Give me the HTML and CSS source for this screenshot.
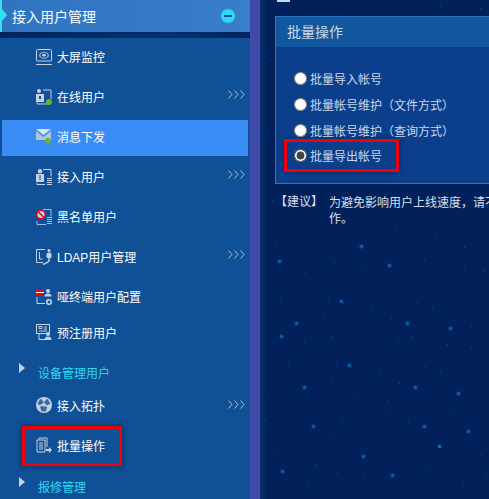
FILE: index.html
```html
<!DOCTYPE html>
<html lang="zh-CN">
<head>
  <meta charset="UTF-8" />
  <title>批量操作</title>
  <link rel="stylesheet" href="styles.css">
</head>
<body>
  <div class="page">

    <!-- Side menu -->
    <div class="sidebar">
      <div class="menu-head">
        <span class="head-title">接入用户管理</span>
        <span class="head-minus"></span>
      </div>
      <div class="head-strip"></div>

      <div class="item">
        <svg class="icon" viewBox="0 0 16 16"><rect x="0.5" y="0.5" width="15" height="11.500" rx="1" fill="none" stroke="#c6d2e2"/><ellipse cx="8" cy="6.300" rx="5" ry="3.600" fill="#8ea6c6"/><ellipse cx="8" cy="6.300" rx="3.400" ry="2.400" fill="#16508f"/><ellipse cx="8" cy="6.300" rx="1.800" ry="1.300" fill="#c6d2e2"/><path d="M0 15.500h16" stroke="#c6d2e2"/></svg>
        <span>大屏监控</span>
      </div>
      <div class="item">
        <svg class="icon" viewBox="0 0 16 16"><path d="M7 1h8v9M1 13.500v1.500h10" fill="none" stroke="#c6d2e2"/><circle cx="3" cy="2" r="2" fill="#c6d2e2"/><path d="M0 5h8v8H0z" fill="#c6d2e2"/><rect x="3" y="7" width="2" height="3" fill="#16508f"/><circle cx="13" cy="13" r="3" fill="#6cb02c"/></svg>
        <span>在线用户</span>
        <svg class="more" viewBox="0 0 17 9"><path d="M0.500 0.500l3.500 4-3.500 4M6.500 0.500l3.500 4-3.500 4M12.500 0.500l3.500 4-3.500 4" fill="none" stroke="#a8c0e0"/></svg>
      </div>
      <div class="item active">
        <svg class="icon" viewBox="0 0 16 16"><path d="M0 0h15L7.500 6z" fill="#dce3ec"/><path d="M0 2l7.500 6L15 2v9H0z" fill="#b4c3d8"/><path d="M10 9h4v3h2l-4 4-4-4h2z" fill="#6cb02c"/></svg>
        <span>消息下发</span>
      </div>
      <div class="item">
        <svg class="icon" viewBox="0 0 16 16"><path d="M7 0.500h8v7M1 14v1.500h8" fill="none" stroke="#c6d2e2"/><circle cx="4" cy="2.200" r="2.200" fill="#c6d2e2"/><path d="M0 5h8v8H0z" fill="#c6d2e2"/><path d="M3.500 6h1v5h-1z" fill="#16508f"/><path d="M11 9.500h5M11 11.500h5M11 13.500h5M11 15.500h5" stroke="#c6d2e2"/></svg>
        <span>接入用户</span>
        <svg class="more" viewBox="0 0 17 9"><path d="M0.500 0.500l3.500 4-3.500 4M6.500 0.500l3.500 4-3.500 4M12.500 0.500l3.500 4-3.500 4" fill="none" stroke="#a8c0e0"/></svg>
      </div>
      <div class="item">
        <svg class="icon" viewBox="0 0 16 16"><path d="M7 0.500h8v7M1 12v3.500h9" fill="none" stroke="#a9bad2"/><path d="M11 8.500h5M11 10.500h5M11 12.500h5M11 14.500h5" stroke="#a9bad2"/><circle cx="5" cy="5.500" r="4.400" fill="#c6d2e2" stroke="#d4082a" stroke-width="1.600"/><path d="M2 2.500l6 6" stroke="#d4082a" stroke-width="1.400"/></svg>
        <span>黑名单用户</span>
      </div>
      <div class="item">
        <svg class="icon" viewBox="0 0 16 16"><path d="M9 0.500H0.500v13H7" fill="none" stroke="#c6d2e2"/><path d="M3.500 3v7h3" fill="none" stroke="#c6d2e2"/><circle cx="13" cy="1.500" r="1.500" fill="#c6d2e2"/><rect x="10.500" y="3.500" width="5" height="6" rx="2" fill="#c6d2e2"/><path d="M13 9.500v2.500l-4 3" fill="none" stroke="#c6d2e2" stroke-width="1.500"/><circle cx="8" cy="15" r="1" fill="#c6d2e2"/></svg>
        <span>LDAP用户管理</span>
        <svg class="more" viewBox="0 0 17 9"><path d="M0.500 0.500l3.500 4-3.500 4M6.500 0.500l3.500 4-3.500 4M12.500 0.500l3.500 4-3.500 4" fill="none" stroke="#a8c0e0"/></svg>
      </div>
      <div class="item">
        <svg class="icon" viewBox="0 0 16 16"><rect x="0" y="0" width="8" height="7" fill="#f0000c"/><path d="M0 3.500h8" stroke="#fff"/><circle cx="12" cy="2" r="2" fill="#c6d2e2"/><path d="M8.500 7.500a3.500 3 0 0 1 7 0z" fill="#c6d2e2"/><path d="M1 8v6.500h8" fill="none" stroke="#c6d2e2"/><circle cx="13" cy="13" r="2.300" fill="none" stroke="#c6d2e2" stroke-width="1.600"/></svg>
        <span>哑终端用户配置</span>
      </div>
      <div class="item short">
        <svg class="icon" viewBox="0 0 16 16"><rect x="0.500" y="0.500" width="13" height="9" fill="none" stroke="#c6d2e2"/><path d="M3 2.500h3v2H3zM8 3h3M8 5h3M3 7h8" stroke="#c6d2e2" fill="none"/><path d="M3 10v5.500h6" fill="none" stroke="#c6d2e2"/><circle cx="12" cy="10" r="2" fill="#c6d2e2"/><path d="M8.500 16a3.500 3.500 0 0 1 7 0z" fill="#c6d2e2"/></svg>
        <span>预注册用户</span>
      </div>

      <div class="group">
        <span class="caret"></span>
        <span>设备管理用户</span>
      </div>

      <div class="item topo">
        <svg class="icon" viewBox="0 0 16 16"><circle cx="8" cy="8" r="8" fill="#c6d2e2"/><path d="M5 1.500l3 4-4.500 3-2-2.500zM11 1.500l3.500 5-3.500 2L8 5.500zM4 10l3.500-2 3.500 2 -1 4.500H5.500z" fill="#16508f" opacity="0.800"/><circle cx="8" cy="8" r="1.600" fill="#c6d2e2"/></svg>
        <span>接入拓扑</span>
        <svg class="more" viewBox="0 0 17 9"><path d="M0.500 0.500l3.500 4-3.500 4M6.500 0.500l3.500 4-3.500 4M12.500 0.500l3.500 4-3.500 4" fill="none" stroke="#a8c0e0"/></svg>
      </div>
      <div class="item boxed">
        <svg class="icon" viewBox="0 0 16 16"><path d="M3 2.500V1h8v9M1 3h8v12H1z" fill="none" stroke="#c6d2e2"/><path d="M3 6h4M3 8h4M3 10h4M3 12h4" stroke="#c6d2e2"/><path d="M10 12h3v-2l3 3-3 3v-2h-3z" fill="#c6d2e2"/></svg>
        <span>批量操作</span>
      </div>

      <div class="group last">
        <span class="caret"></span>
        <span>报修管理</span>
      </div>
    </div>

    <div class="divider"></div>

    <!-- Main area -->
    <div class="main">
      <div class="crumb"></div>
      <div class="panel">
        <div class="panel-title">批量操作</div>
        <div class="panel-body">
          <label class="radio-row"><input type="radio" name="op"><span>批量导入帐号</span></label>
          <label class="radio-row"><input type="radio" name="op"><span>批量帐号维护<span class="paren">（</span>文件方式<span class="paren">）</span></span></label>
          <label class="radio-row"><input type="radio" name="op"><span>批量帐号维护<span class="paren">（</span>查询方式<span class="paren">）</span></span></label>
          <label class="radio-row boxed-row"><input type="radio" name="op" checked><span>批量导出帐号</span></label>
        </div>
      </div>
      <div class="tip">
        <span class="tip-label">【建议】</span>
        <span class="tip-text">为避免影响用户上线速度<span class="paren">，</span>请不要在用户上线高峰期进行此操作。</span>
      </div>
    </div>

    <!-- Star field of the page background -->
    <div class="stars-big"></div>
    <div class="stars-small"></div>
  </div>
</body>
</html>
```

FILE: styles.css
```css
* {
  box-sizing: border-box;
  margin: 0;
  padding: 0;
}

html, body {
  width: 489px;
  height: 499px;
  overflow: hidden;
}

body {
  font-family: "Liberation Sans", "Noto Sans CJK SC", sans-serif;
  font-size: 12px;
  color: #fff;
  background: #02205a;
}

.page {
  display: flex;
  height: 499px;
  overflow: hidden;
  position: relative;
}

/* Side menu */
.sidebar {
  width: 250px;
  flex: none;
  height: 499px;
  overflow: hidden;
  background: #0f5096;
}

.menu-head {
  height: 32px;
  display: flex;
  align-items: center;
  justify-content: space-between;
  padding: 0 15px 0 10px;
  background: linear-gradient(90deg, #2f74bf, #397dcb);
  border-left: 2px solid #35e0f0;
  font-size: 14px;
  position: relative;
}

.menu-head::before {
  content: "";
  position: absolute;
  left: 0;
  top: 9px;
  border-left: 5px solid #35e0f0;
  border-top: 6px solid transparent;
  border-bottom: 6px solid transparent;
}

.head-minus {
  width: 14px;
  height: 14px;
  border-radius: 50%;
  background: #2fd9f5;
  position: relative;
}

.head-minus::after {
  content: "";
  position: absolute;
  left: 3px;
  top: 6px;
  width: 8px;
  height: 2px;
  background: #15509a;
}

.head-strip {
  height: 6px;
  background: linear-gradient(90deg, #02245c, #04306e 68%, #02245c);
}

.item {
  height: 40px;
  display: flex;
  align-items: center;
  gap: 5px;
  padding: 0 0 3px 36px;
  position: relative;
}

.item .icon {
  width: 16px;
  height: 16px;
  flex: none;
}

.more {
  position: absolute;
  right: 5px;
  top: 12px;
  width: 17px;
  height: 9px;
}

.item.active {
  height: 36px;
  margin: 2px 2px;
  padding: 0 0 3px 34px;
  background: #3a8df5;
}

.item.short {
  height: 36px;
  padding-bottom: 8px;
}

.item.topo {
  height: 30px;
  padding-bottom: 0;
}

.item.topo .more {
  top: 10px;
}

.item.boxed {
  width: 100px;
  height: 40px;
  margin: 6px 0 2px 22px;
  padding: 0 0 2px 11px;
  border: 3px solid #f0000c;
  box-shadow: 0 0 6px rgba(0, 0, 0, 0.5);
}

.group {
  height: 36px;
  display: flex;
  align-items: center;
  padding-left: 38px;
  color: #2fd9f5;
  position: relative;
}

.caret {
  position: absolute;
  left: 19px;
  top: 9px;
  border-left: 6px solid #c6d2e2;
  border-top: 5px solid transparent;
  border-bottom: 5px solid transparent;
}

.divider {
  width: 10px;
  flex: none;
  background: #3f4aa8;
}

/* Main area */
.main {
  flex: 1;
  min-width: 0;
  padding-left: 15px;
  background: linear-gradient(90deg, #05306f, #02205a 8px);
  position: relative;
}

.crumb {
  width: 13px;
  height: 2px;
  margin: 0 0 14px 2px;
  background: #c9d8ea;
}

.panel {
  width: 240px;
  height: 168px;
  border: 1px solid #2d74c4;
  border-right: none;
  background: #0b3f8c;
}

.panel-title {
  height: 30px;
  line-height: 30px;
  padding-left: 11px;
  font-size: 14px;
  color: #c9d8ea;
  background: #12589f;
}

.panel-body {
  padding: 18px 0 0 18px;
}

.radio-row {
  display: flex;
  align-items: center;
  gap: 3px;
  height: 26px;
  width: 200px;
  white-space: nowrap;
  color: #c9d8ea;
}

.radio-row input {
  width: 13px;
  height: 13px;
  margin: 0;
  flex: none;
  accent-color: #444;
}

.paren {
  font-family: "Noto Sans CJK TC", sans-serif;
}

.boxed-row {
  width: 115px;
  height: 33px;
  margin: -4px 0 0 -10px;
  padding-left: 7px;
  border: 3px solid #f0000c;
  box-shadow: 0 0 5px rgba(0, 0, 0, 0.4);
}

.tip {
  display: flex;
  margin-top: 10px;
  width: 390px;
  color: #d5e0ee;
  line-height: 16px;
}

.tip-label {
  flex: none;
  width: 54px;
}

.tip-text {
  width: 330px;
  flex: none;
}

/* Stars: one dot per shadow, measured on the background */
.stars-big,
.stars-small {
  position: absolute;
  left: 0;
  top: 0;
  width: 1px;
  height: 1px;
}

.stars-big {
  background: transparent;
  box-shadow:
    279px 261px 2px 1px #1278cc, 361px 246px 2px 1px #1278cc, 389px 265px 2px 1px #1278cc,
    341px 301px 2px 1px #1278cc, 296px 323px 2px 1px #1278cc, 281px 336px 2px 1px #1278cc,
    407px 323px 2px 1px #1278cc, 450px 328px 2px 1px #1278cc, 349px 365px 2px 1px #1278cc,
    304px 387px 2px 1px #1278cc, 415px 387px 2px 1px #1278cc, 458px 393px 2px 1px #1278cc,
    313px 426px 2px 1px #1278cc, 424px 426px 2px 1px #1278cc, 468px 431px 2px 1px #1278cc,
    363px 456px 2px 1px #1278cc, 282px 471px 2px 1px #1278cc, 392px 475px 2px 1px #1278cc,
    439px 446px 1px 1px #1278cc;
}

.stars-small {
  box-shadow:
    334px 262px 1px #1268b4, 280px 298px 1px #1268b4, 328px 298px 1px #1268b4,
    372px 308px 1px #1268b4, 324px 315px 1px #1268b4, 391px 318px 1px #1268b4,
    417px 302px 1px #1268b4, 432px 308px 1px #1268b4, 332px 336px 1px #1268b4,
    304px 342px 1px #1268b4, 398px 338px 1px #1268b4, 412px 336px 1px #1268b4,
    447px 344px 1px #1268b4, 471px 326px 1px #1268b4, 471px 348px 1px #1268b4,
    288px 362px 1px #1268b4, 336px 362px 1px #1268b4, 380px 372px 1px #1268b4,
    425px 366px 1px #1268b4, 440px 372px 1px #1268b4, 332px 379px 1px #1268b4,
    399px 383px 1px #1268b4, 269px 393px 1px #1268b4, 357px 397px 1px #1268b4,
    388px 401px 1px #1268b4, 389px 410px 1px #1268b4, 450px 410px 1px #1268b4,
    265px 419px 1px #1268b4, 342px 418px 1px #1268b4, 408px 422px 1px #1268b4,
    333px 438px 1px #1268b4, 277px 454px 1px #1268b4, 316px 464px 1px #1268b4,
    337px 473px 1px #1268b4, 364px 477px 1px #1268b4, 426px 470px 1px #1268b4,
    481px 454px 1px #1268b4, 486px 474px 1px #1268b4, 308px 484px 1px #1268b4,
    463px 485px 1px #1268b4, 436px 235px 1px #1268b4, 464px 247px 1px #1268b4,
    464px 269px 1px #1268b4, 483px 271px 1px #1268b4, 424px 259px 1px #1268b4,
    275px 243px 1px #1268b4, 305px 273px 1px #1268b4, 362px 266px 1px #1268b4,
    395px 229px 1px #1268b4, 270px 60px 1px #1268b4, 268px 130px 1px #1268b4,
    272px 200px 1px #1268b4, 480px 8px 1px #1268b4, 440px 6px 1px #1268b4;
}
```
